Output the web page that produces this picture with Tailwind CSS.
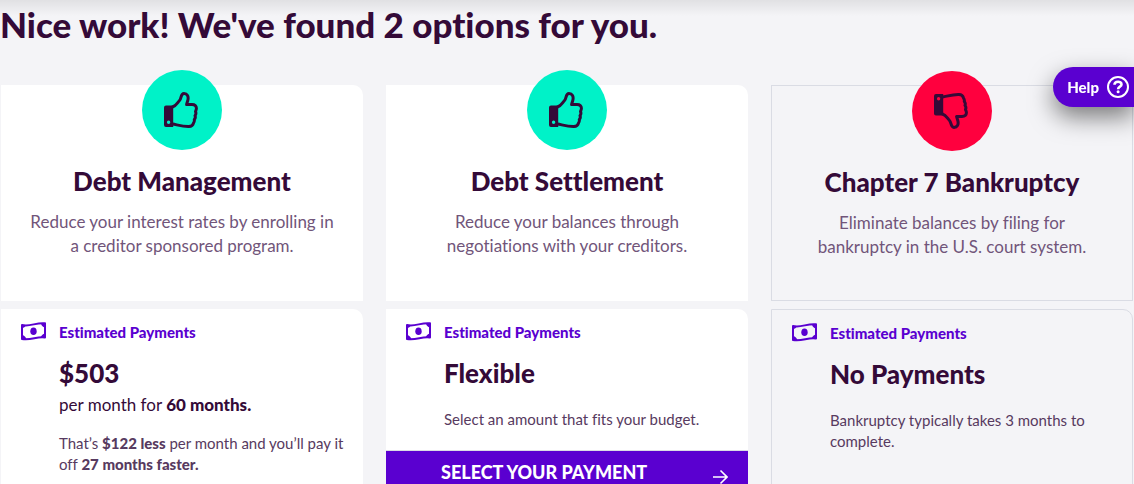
<!doctype html>
<html lang="en">

<head>
  <meta charset="utf-8">
  <meta name="viewport" content="width=device-width, initial-scale=1">
  <title>Your options</title>
  <script src="https://cdn.jsdelivr.net/npm/@tailwindcss/browser@4"></script>
</head>

<body class="bg-[#f4f4f7] text-[#340a38] font-['Lato','Open_Sans',sans-serif] [font-variant-ligatures:none] overflow-x-hidden">

<!-- Shared icons -->
<svg class="hidden" aria-hidden="true">
  <symbol id="thumb" viewBox="0 0 34 36">
    <path fill="currentColor" fill-rule="evenodd" d="M2 13.500h7.200V35H2a2 2 0 0 1-2-2V15.500a2 2 0 0 1 2-2zM4.600 28.600a1.700 1.700 0 1 0 0 3.400a1.700 1.700 0 0 0 0-3.400z"/>
    <path fill="none" stroke="currentColor" stroke-width="3" stroke-linejoin="round" stroke-linecap="round" d="M8.500 15C12 14 13.500 10.500 15.500 8.500C17.500 6.500 16.500 1.600 20 1.600C23.500 1.600 24.500 4.500 24 7.500C23.700 9.500 22.800 11 22.600 12.600H28C31 12.600 32.500 14.200 32.400 16.500C32.300 18 31.500 18.800 31.500 19.500C32.100 20.800 31.900 22.500 31 23.600C31.600 25 31.200 26.600 30.300 27.600C30.700 29 30 30.300 29.400 31.300C28.800 33.600 27.600 34.300 25 34.400C19 34.600 14 33 8.500 32"/>
  </symbol>
  <symbol id="cash" viewBox="0 0 25 19">
    <path fill="none" stroke="currentColor" stroke-width="2" stroke-linejoin="round" d="M1 3C9 5 15 .300 24 1.300V15.500C16 14 10 18.800 1 17z"/>
    <path fill="currentColor" d="M1 3h4q-1 3-4 3.500zM24 1.500h-4q.5 3 4 4zM1 17.300h4.500q-1-3.500-4.500-4.500zM24 16h-4.500q1-4 4.500-4.500z"/>
    <ellipse cx="12.500" cy="9.300" rx="3.200" ry="3.800" fill="currentColor"/>
  </symbol>
</svg>

<div class="absolute top-0 inset-x-0 h-4 bg-linear-to-b from-black/8 to-transparent"></div>

<button type="button" class="fixed z-20 top-[67px] right-0 h-10 pl-3.5 pr-[5px] flex items-center gap-2 rounded-l-full bg-[#5a00d0] text-white text-[15px] font-black shadow-[0_10px_25px_rgba(0,0,0,0.5)]">
  Help
  <svg class="size-[22px]" viewBox="0 0 22 22" fill="none" stroke="currentColor" stroke-width="2" aria-hidden="true">
    <circle cx="11" cy="11" r="10"/>
    <path stroke-width="2.600" d="M7.500 8.800C7.500 4.800 14.500 4.800 14.500 8.500C14.500 10.700 11.100 10.700 11.100 13.200"/>
    <circle cx="11.100" cy="15.800" r="1.500" fill="currentColor" stroke="none"/>
  </svg>
</button>

<main>
  <h1 class="pt-1 text-[35px] leading-10 font-black">Nice work! We've found 2 options for you.</h1>

  <div class="mt-[41px] px-px grid grid-cols-3 gap-x-[23px] gap-y-2">
    <section class="min-h-[216px] px-7 pb-10 flex flex-col items-center text-center bg-white rounded-tr-[10px]">
      <div class="-mt-[15px] size-20 pr-0.5 flex items-center justify-center rounded-full bg-[#00f2c8]">
        <svg class="w-[34px] h-9" aria-hidden="true"><use href="#thumb"/></svg>
      </div>
      <h2 class="mt-[15px] text-[26px] leading-8 font-black">Debt Management</h2>
      <p class="mt-[13px] text-[17px] leading-6 text-[#71557a]">Reduce your interest rates by enrolling in <br>a creditor sponsored program.</p>
    </section>

    <section class="min-h-[216px] px-7 pb-10 flex flex-col items-center text-center bg-white rounded-tr-[10px]">
      <div class="-mt-[15px] size-20 pr-0.5 flex items-center justify-center rounded-full bg-[#00f2c8]">
        <svg class="w-[34px] h-9" aria-hidden="true"><use href="#thumb"/></svg>
      </div>
      <h2 class="mt-[15px] text-[26px] leading-8 font-black">Debt Settlement</h2>
      <p class="mt-[13px] text-[17px] leading-6 text-[#71557a]">Reduce your balances through <br>negotiations with your creditors.</p>
    </section>

    <section class="min-h-[216px] px-7 pb-10 flex flex-col items-center text-center border border-[#dadce4]">
      <div class="-mt-[15px] size-20 pr-0.5 flex items-center justify-center rounded-full bg-[#ff003e]">
        <svg class="w-[34px] h-9 -scale-y-100" aria-hidden="true"><use href="#thumb"/></svg>
      </div>
      <h2 class="mt-[15px] text-[26px] leading-8 font-black">Chapter 7 Bankruptcy</h2>
      <p class="mt-[13px] text-[17px] leading-6 text-[#71557a]">Eliminate balances by filing for <br>bankruptcy in the U.S. court system.</p>
    </section>

    <section class="bg-white rounded-tr-[10px]">
      <div class="pt-3 pl-5 pr-4 grid grid-cols-[25px_1fr] gap-x-[13px]">
        <svg class="mt-px w-[25px] h-[19px] text-[#5a00d0]" aria-hidden="true"><use href="#cash"/></svg>
        <h3 class="text-[15px] leading-[22px] font-black text-[#5a00d0]">Estimated Payments</h3>
        <div class="col-start-2 pb-8">
          <p class="mt-[14px] text-[26px] leading-8 font-black">$503</p>
          <p class="mt-0.5 text-[17px] leading-7">per month for <b class="font-black">60 months.</b></p>
          <p class="mt-3.5 text-[15px] leading-[21px] text-[#573a60]">That’s <b class="font-black">$122 less</b> per month and you’ll pay it <br>off <b class="font-black">27 months faster.</b></p>
        </div>
      </div>
    </section>

    <section class="bg-white rounded-tr-[10px]">
      <div class="pt-3 pl-5 pr-4 grid grid-cols-[25px_1fr] gap-x-[13px]">
        <svg class="mt-px w-[25px] h-[19px] text-[#5a00d0]" aria-hidden="true"><use href="#cash"/></svg>
        <h3 class="text-[15px] leading-[22px] font-black text-[#5a00d0]">Estimated Payments</h3>
        <div class="col-start-2 pb-5">
          <p class="mt-[14px] text-[26px] leading-8 font-black">Flexible</p>
          <p class="mt-5 text-[15px] leading-[21px] text-[#573a60]">Select an amount that fits your budget.</p>
        </div>
      </div>
      <button type="button" class="w-full h-[52px] pl-[55px] pr-5 flex items-center justify-between border-t border-[#dadce4] bg-[#5a00d0] text-white">
        <span class="pb-2.5 text-lg font-black">SELECT YOUR PAYMENT</span>
        <svg class="size-4" viewBox="0 0 16 16" fill="none" stroke="currentColor" stroke-width="1.600" aria-hidden="true">
          <path d="M1 8h14M8.500 1.500L15 8l-6.500 6.500"/>
        </svg>
      </button>
    </section>

    <section class="border border-[#dadce4] rounded-tr-[10px]">
      <div class="pt-3 pl-5 pr-4 grid grid-cols-[25px_1fr] gap-x-[13px]">
        <svg class="mt-px w-[25px] h-[19px] text-[#5a00d0]" aria-hidden="true"><use href="#cash"/></svg>
        <h3 class="text-[15px] leading-[22px] font-black text-[#5a00d0]">Estimated Payments</h3>
        <div class="col-start-2 pb-8">
          <p class="mt-[14px] text-[26px] leading-8 font-black">No Payments</p>
          <p class="mt-5 text-[15px] leading-[21px] text-[#573a60]">Bankruptcy typically takes 3 months to <br>complete.</p>
        </div>
      </div>
    </section>
  </div>
</main>

</body>

</html>
